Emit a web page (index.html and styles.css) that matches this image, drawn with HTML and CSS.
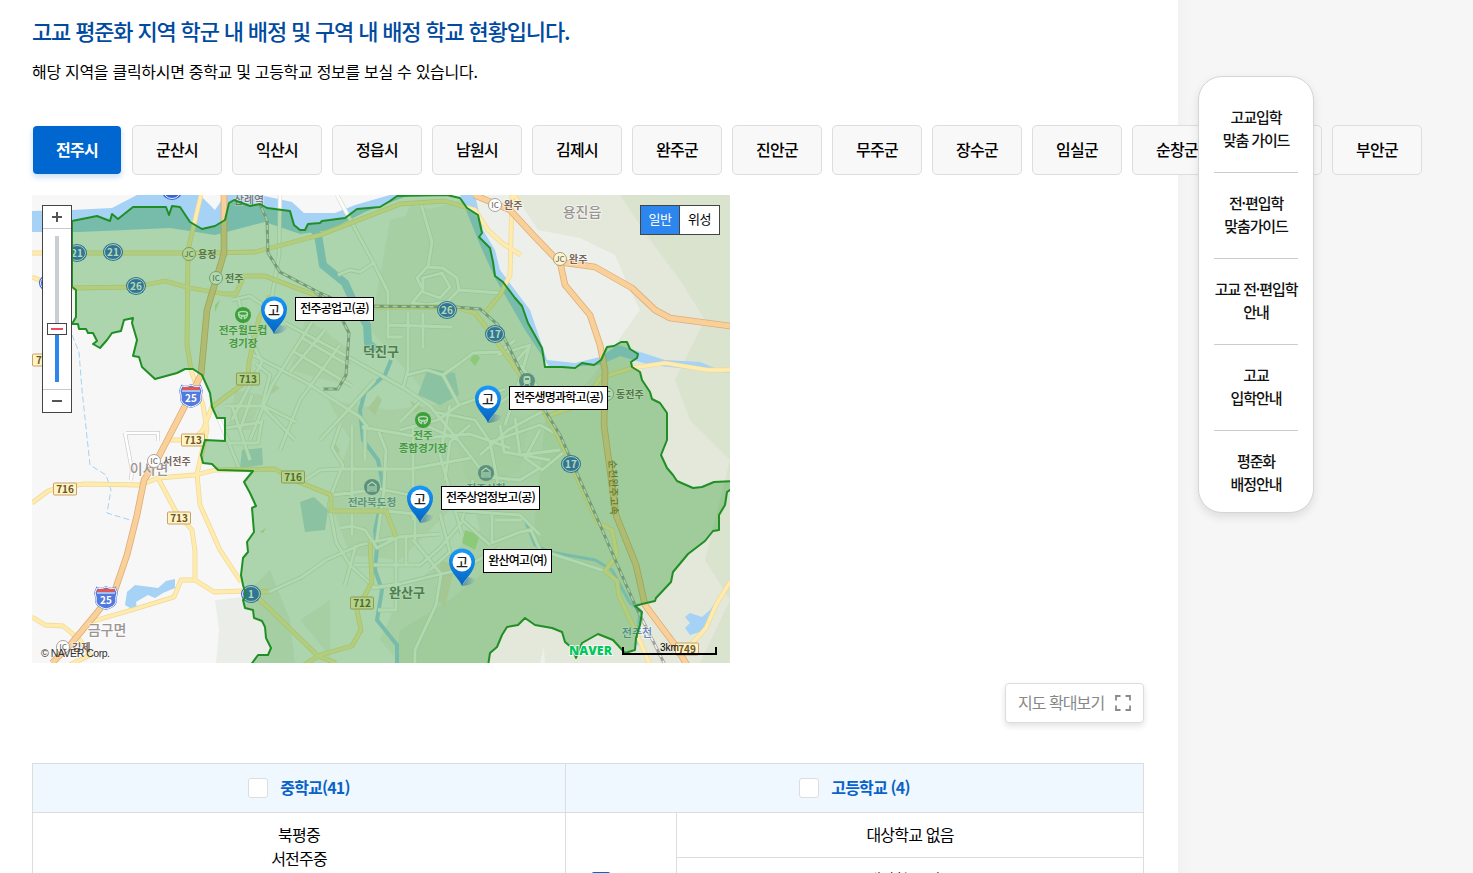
FILE: index.html
```html
<!DOCTYPE html>
<html lang="ko">
<head>
<meta charset="utf-8">
<title>고교 평준화 지역 학교 현황</title>
<link rel="stylesheet" href="styles.css">
</head>
<body>
<div class="layout">
<main class="content">
  <h1 class="title">고교 평준화 지역 학군 내 배정 및 구역 내 배정 학교 현황입니다.</h1>
  <p class="lead">해당 지역을 클릭하시면 중학교 및 고등학교 정보를 보실 수 있습니다.</p>
  <nav class="tabs">
    <button class="tab active">전주시</button><button class="tab">군산시</button><button class="tab">익산시</button><button class="tab">정읍시</button><button class="tab">남원시</button><button class="tab">김제시</button><button class="tab">완주군</button><button class="tab">진안군</button><button class="tab">무주군</button><button class="tab">장수군</button><button class="tab">임실군</button><button class="tab">순창군</button><button class="tab">고창군</button><button class="tab">부안군</button>
  </nav>

  <div class="map">
    <svg class="map-canvas" viewBox="32 195 698 468" width="698" height="468">
      <defs>
        <linearGradient id="pinFill" x1="0" y1="0" x2="0" y2="1"><stop offset="0" stop-color="#1b9af7"/><stop offset=".5" stop-color="#0b7fe0"/><stop offset="1" stop-color="#0864bd"/></linearGradient>
        <linearGradient id="pinShade" x1="0" y1="0" x2="1" y2="0"><stop offset="0" stop-color="#1f5fa6" stop-opacity=".6"/><stop offset="1" stop-color="#1f5fa6" stop-opacity="0"/></linearGradient>
        <g id="pin">
          <path d="M0 0 L6 -9 L14 -7 Q12 -1 0 0Z" fill="url(#pinShade)"/>
          <path d="M0 0 C-3 -8 -13 -14 -13 -25 A13 12.500 0 0 1 13 -25 C13 -14 3 -8 0 0Z" fill="url(#pinFill)"/>
          <circle cx="0" cy="-24" r="9.500" fill="#fff"/>
          <text class="pin-text" x="0" y="-19">고</text>
        </g>
        <g id="shield">
          <path d="M-9 -10 Q-5 -8 0 -11 Q5 -8 9 -10 L11 -5 Q9 0 10 4 Q8 9 0 11 Q-8 9 -10 4 Q-9 0 -11 -5Z" fill="#5279dc" stroke="#5279dc" stroke-width="2"/>
          <path d="M-9 -10 Q-5 -8 0 -11 Q5 -8 9 -10 L11 -5 Q9 0 10 4 Q8 9 0 11 Q-8 9 -10 4 Q-9 0 -11 -5Z" fill="#5279dc" stroke="#fff" stroke-width="1"/>
          <path d="M-8 -9 H8 L9 -6 H-9Z" fill="#e4574f"/><path d="M-9 -5 H9" stroke="#fff"/>
          <text class="num" x="0" y="6">25</text>
        </g>
        <g id="round"><ellipse rx="10" ry="9" fill="#3a63d4"/><ellipse rx="8.500" ry="7.500" fill="#3a63d4" stroke="#fff" stroke-width=".9"/></g>
        <g id="ic"><circle r="6.500" fill="#fff" stroke="#a9a39f"/><text class="ic-text" y="3">IC</text></g>
        <g id="jc"><circle r="6.500" fill="#fff6cf" stroke="#a99b7f"/><text class="ic-text" y="3">JC</text></g>
        <g id="plate"><rect x="-11.500" y="-6" width="23" height="12" rx="1" fill="#fff4c2" stroke="#c9a06b"/></g>
        <g id="minor">
          <path d="M280 195 L279 255 L272 296 M337 195 L373 262 L388 292 V313 M338 275 L350 270 L360 272 L375 262 M420 200 L432 242 L428 267"/>
          <path d="M412 303 L423 290 L417 278 L427 267 L443 268 L457 278 L459 290 L447 302 L427 305Z M423 278 L442 273 L450 287 L440 298 L423 292Z M459 290 L500 293"/>
          <path d="M388 313 V337 H402 M388 325 L452 327 M408 313 V370 L403 388 M423 313 V348 M407 375 L427 370 L443 375 L460 363 L473 353 L500 352 L515 340"/>
          <path d="M253 355 L307 383 L360 417 L370 430 M285 323 L330 347 L407 390 L430 406 L458 440 M325 330 L290 372 M312 322 L272 385 L250 440 M340 345 L300 400 L280 450 M293 351 L352 386 M302 338 L350 366 M375 380 L348 410 L320 440 M443 375 L459 405 L438 420 L400 430 M459 405 L505 389 M420 402 L400 422"/>
          <path d="M232 300 L250 296 L270 310 M238 298 L250 338 L262 362 L250 385 L232 420 M225 406 H262 L295 440 M216 412 L240 470 M232 406 L250 460 M252 395 L240 430 M226 428 L262 422 M228 443 H258 L262 420 M256 364 L270 375 L262 405 L296 422"/>
          <path d="M340 425 L332 448 L343 465 L333 490 L329 505 L336 542 L350 565 L375 588 M352 425 V535 M365 425 V460 M378 430 L386 450 L384 490 L377 540 M341 469 L410 469 L470 458 M333 495 L380 489 L410 495 M362 427 L424 438 L470 434 L510 448 M385 511 L415 514 V540 M340 528 L352 526 L365 530 L377 548 L398 537 L440 534 M396 537 V610 H378 M354 565 H392 L420 565 L440 548 L462 522 M413 425 V520 M413 540 L441 574 L460 570 L500 548 M441 574 L436 605 L415 650 V663 M305 480 L320 470 L343 469 M269 592 L302 577 L326 560 L360 545 L396 537 M372 588 L400 584 L441 574 M440 514 L450 552 L430 570 M406 538 V565 M356 545 L345 585"/>
          <path d="M425 425 L458 440 L485 475 L510 480 M435 412 L475 420 L490 442 L500 495 M450 405 L440 455 L455 510 L462 534 M470 425 L450 442 L445 480 M490 442 L540 425 L560 436 L564 452 L542 470 L525 458 L540 430 M480 455 L508 430 L545 410 M500 425 L504 452 L550 460 M515 418 L520 455 L560 450 M478 476 L520 480 L540 468 M455 510 L490 513 L520 515 L540 535 M492 515 V543 L520 532 L531 530 L540 550 L605 571 M495 520 H522 M473 480 L462 520 L490 545 M498 355 L530 345 L515 395 L505 425 M520 365 L540 390 L562 410 M525 385 L497 405 M528 348 L512 366"/>
        </g>
        <g id="yellow">
          <path d="M32 253 H75 L205 253 L255 252 L320 235 L400 204 L445 201 L475 210 L488 230 L502 243 L521 255"/>
          <path d="M32 277 L42 281 M72 288 L135 287 L165 281 L190 288 L225 294 H236 L244 276 L265 276 L320 297 L350 307 H455 L475 313 L490 332 L506 355 L535 395 L560 440 L598 523 L612 530 L617 555 L605 571 L617 581 L619 596 L636 632 L650 665"/>
          <path d="M201 195 L188 250 L187 345 L191 370 L203 405 L207 430 L197 474 L200 505 L220 550 L241 582"/>
          <path d="M32 503 L48 491 L60 487 L85 484 L140 485 L158 478 L195 475 L215 470 L275 469 L294 480 L331 495 V511 H386 L396 537"/>
          <path d="M158 478 L175 510 L192 530 L195 551 V580 L181 580 L174 597 L135 609 L90 622 L70 645 M195 580 L214 592 L244 591 L269 592 M251 591 L318 656 L336 663 M304 665 L320 655 L352 646 L361 630 L357 610 L372 582 L370 542"/>
          <path d="M32 617 L45 625 L63 626 L80 640 L90 655 L70 665 M248 380 L249 362 L259 318 L270 296 M248 380 L212 407 L203 430 L193 440 L170 440 M521 205 L514 195 M512 195 L510 275 L500 295 L485 313 M632 368 L665 363 L708 370 H730 M632 368 L600 378 L585 403 L545 417 M730 582 L716 605 L706 628 L688 648"/>
        </g>
        <g id="highway">
          <path d="M224 195 L224 253 L207 310 L201 375 L158 458 L144 480 L137 515 L127 555 L115 590 L95 615 L70 645 L52 663"/>
          <path d="M474 195 L510 210 L535 237 L559 262 L595 267 L632 288 L655 310 L670 318 L730 326 M560 262 L565 285 L590 315 L600 345 L605 370 L604 425 L616 515 L636 565 L645 605 L675 645 L687 665"/>
        </g>
      </defs>

      <rect x="32" y="195" width="698" height="468" fill="#f7f7f7"/>
      <path class="land-a" d="M480 195 H730 V663 H400 L380 640 L400 595 L480 530 L450 420 L370 330 L390 220Z"/>
      <path class="land-b" d="M515 195 L538 230 L580 238 L615 255 L630 290 L640 310 L615 345 L590 380 L545 420 L535 520 L545 663 H730 V195Z"/>
      <path class="land-c" d="M620 195 H730 V663 H700 L730 600 L705 560 L730 460 L690 420 L675 380 L705 320 L680 280 L650 240Z"/>
      <path class="land-a" d="M385 270 L410 205 L460 215 L475 255 L440 295Z M325 650 L300 620 L330 600 L330 663Z"/>
      <path class="land-b" d="M450 600 L500 560 L560 575 L540 663 H395 L400 630Z"/>
      <path class="land-d" d="M215 600 L243 597 L270 570 L290 620 L295 663 H216 L219 630Z"/>
      <path class="urban" d="M306 318 L350 350 L345 385 L290 370Z M328 400 L350 440 L330 500 L350 555 L400 560 L450 510 L520 470 L530 420 L470 400 L390 410Z M235 390 L262 395 L250 430 L228 430Z"/>
      <path class="wash" d="M378 395 L382 400 L375 415 L368 408Z M410 400 L423 408 L415 413Z M440 560 L455 565 L445 608 L438 600Z M332 440 L340 450 L335 458Z M275 385 L280 388 L270 395Z"/>
      <path class="park" d="M475 352 L480 358 L475 366 L470 360Z M260 532 L266 528 L263 533Z M465 530 L480 535 L475 550 L462 543Z M215 305 L220 300 L215 312Z"/>

      <path class="water" d="M32 211 L72 210 L112 208 L137 195 H200 L215 210 L225 195 H260 L292 202 L304 213 L335 213 L355 205 L390 195 H410 L365 212 L330 230 L300 234 L265 222 L215 235 L170 228 L80 232 H32Z"/>
      <path class="water" d="M125 605 L127 592 L135 585 L158 588 L166 581 L175 579 V588 L163 593 L155 598 L148 595 L136 602 L137 609 L130 608Z M685 628 L690 623 L685 617 L690 613 L702 617 L710 610 L720 595 L716 610 L706 630 L690 635Z"/>
      <path class="lake" d="M428 368 L455 373 L459 395 L440 405 L418 395Z M300 502 L314 497 L328 510 L325 530 L305 532Z M242 450 L262 448 L263 465 L240 468Z"/>
      <path class="water" d="M460 195 H475 L483 230 L495 250 L500 270 L530 310 L547 360 L575 363 L600 357 L618 345 L640 352 L665 360 L700 362 L720 370 L730 372 V373 L710 371 L650 365 L620 356 L600 365 L550 368 L525 330 L495 278 L480 245Z"/>
      <g class="river"><path stroke-width="8" d="M310 225 L318 235 L323 265 L345 283 L355 305 L367 325 L368 343 L376 350"/><path stroke-width="4" d="M391 360 L385 375 L365 392 L360 410 L363 440 L378 460 L384 490 L375 530 L377 548 L375 570 L382 590 L377 620 L397 645 V663"/><path stroke-width="3" d="M525 520 L535 545 L550 552 L595 560 L612 570 L630 603 L640 610 L637 645"/></g>
      <path class="brook" d="M72 335 L79 352 L82 390 L90 465 L106 475 L111 490 L107 513 L130 520 M43 238 V245"/>

      <path d="M126 433 H158 V441 M131 480 L132 470 L125 433" class="outline-road"/>
      <path d="M126 433 H158 V441 M131 480 L132 470 L125 433" class="outline-fill"/>
      <use href="#minor" class="minor-case"/><use href="#minor" class="minor-fill"/>
      <use href="#yellow" class="yellow-case"/><use href="#yellow" class="yellow-fill"/>
      <g id="rail"><path class="rail" d="M258 200 L267 220 L268 253 L280 272 L318 292 L350 306 L455 307 L480 309 L498 325 L520 370 L560 435 L600 525 L635 605 L665 665 M315 292 L340 315 L349 333 L346 375 L338 389 H323"/><path class="rail-dash" d="M258 200 L267 220 L268 253 L280 272 L318 292 L350 306 L455 307 L480 309 L498 325 L520 370 L560 435 L600 525 L635 605 L665 665 M315 292 L340 315 L349 333 L346 375 L338 389 H323"/></g>
      <use href="#highway" class="highway-case"/><use href="#highway" class="highway-fill"/>

      <use href="#round" x="172" y="191"/>
      <use href="#round" x="49" y="283"/>
      <g transform="translate(77 253)"><use href="#round"/><text class="num" y="4">21</text></g>
      <g transform="translate(113 252)"><use href="#round"/><text class="num" y="4">21</text></g>
      <g transform="translate(136 286)"><use href="#round"/><text class="num" y="4">26</text></g>
      <g transform="translate(447 310)"><use href="#round"/><text class="num" y="4">26</text></g>
      <g transform="translate(495 334)"><use href="#round"/><text class="num" y="4">17</text></g>
      <g transform="translate(571 464)"><use href="#round"/><text class="num" y="4">17</text></g>
      <g transform="translate(251 594)"><use href="#round"/><text class="num" y="4">1</text></g>
      <use href="#shield" x="191" y="396"/><use href="#shield" x="106" y="598"/>
      <g transform="translate(248 379)"><use href="#plate"/><text class="plate-text" y="4">713</text></g>
      <g transform="translate(193 440)"><use href="#plate"/><text class="plate-text" y="4">713</text></g>
      <g transform="translate(179 518)"><use href="#plate"/><text class="plate-text" y="4">713</text></g>
      <g transform="translate(65 489)"><use href="#plate"/><text class="plate-text" y="4">716</text></g>
      <g transform="translate(293 477)"><use href="#plate"/><text class="plate-text" y="4">716</text></g>
      <g transform="translate(362 603)"><use href="#plate"/><text class="plate-text" y="4">712</text></g>
      <g transform="translate(687 649)"><use href="#plate"/><text class="plate-text" y="4">749</text></g>
      <g transform="translate(44 360)"><use href="#plate"/><text class="plate-text" x="-5" y="4">7</text></g>
      <text class="town" x="582" y="217">용진읍</text><text class="town" x="149" y="474">이서면</text><text class="town" x="107" y="635">금구면</text>
      <text class="city" x="381" y="356">덕진구</text><text class="city" x="407" y="597">완산구</text>
      <text class="station" x="249" y="204">삼례역</text>
      <use href="#jc" x="189" y="254"/><text class="small" x="198" y="258">용정</text>
      <use href="#ic" x="216" y="278"/><text class="small" x="225" y="282">전주</text>
      <use href="#ic" x="495" y="205"/><text class="small" x="504" y="209">완주</text>
      <use href="#jc" x="560" y="259"/><text class="small" x="569" y="263">완주</text>
      <use href="#ic" x="607" y="394"/><text class="small" x="616" y="398">동전주</text>
      <use href="#ic" x="154" y="461"/><text class="small" x="163" y="465">서전주</text>
      <use href="#ic" x="63" y="647"/><text class="small" x="72" y="651">김제</text>
      <g fill="#4aa646"><circle cx="243" cy="315" r="8"/><circle cx="423" cy="420" r="8"/></g>
      <g fill="none" stroke="#fff" stroke-width="1.500"><g id="stadium"><ellipse cx="243" cy="313.500" rx="4.500" ry="2"/><path d="M238.500 314 Q239 318 241.500 318.500 V316 H244.500 V318.500 Q247 318 247.500 314"/></g><use href="#stadium" x="180" y="105"/></g>
      <g fill="#7b8fb0"><circle cx="372" cy="487" r="8"/><circle cx="486" cy="473" r="8"/><circle cx="527" cy="381" r="8"/></g>
      <g fill="none" stroke="#fff" stroke-width="1.200"><path d="M368 485 L372 482 L376 485 V491 H368Z M370 486 V490 M372 486 V490 M374 486 V490"/><path d="M482 471 L486 468 L490 471 V477 H482Z M484 472 V476 M486 472 V476 M488 472 V476"/></g>
      <rect x="523.500" y="376" width="7" height="8" rx="2" fill="#fff"/><path d="M525 379 H529" stroke="#7b8fb0" stroke-width="2"/><path d="M525 384 L523 387 M529 384 L531 387" stroke="#fff"/>
      <g class="place"><text x="243" y="334">전주월드컵</text><text x="243" y="347">경기장</text><text x="423" y="439">전주</text><text x="423" y="452">종합경기장</text></g>
      <g class="office"><text x="372" y="506">전라북도청</text><text x="486" y="492">전주시청</text></g>
      <text class="stream" x="637" y="637">전주천</text>
      <text class="road-name" transform="translate(609 460) rotate(88)">순천완주고속</text>

      <path class="district" d="M72 221 L97 216 L110 221 L112 214 L118 219 L133 207 H166 L169 215 L172 206 L180 207 L190 222 L202 229 L215 226 L225 220 L229 203 L234 200 L250 206 L260 204 L267 208 L290 211 L294 225 L300 230 L305 230 L308 224 L320 223 L322 221 L345 218 L357 209 L380 207 L390 201 L397 196 L447 195 L460 198 L467 208 L478 215 L482 233 L479 237 L490 248 L493 262 L495 276 L503 282 L515 298 L522 306 L528 323 L542 348 L545 367 H562 L575 368 L582 363 L594 365 L601 360 L607 347 L614 346 L621 342 L627 342 L630 349 L638 354 L637 358 L631 362 L632 367 L640 372 L642 380 L650 392 L652 399 L660 403 L667 413 V440 L661 455 L667 468 L673 475 L677 481 L693 488 L702 487 L714 482 L733 481 V488 L727 492 L725 505 L719 515 V530 L713 531 L705 541 L688 554 L673 572 L671 582 L656 598 L655 601 L642 604 L635 606 L642 612 L640 625 L636 638 L635 650 L625 653 L613 640 L598 634 L582 643 L576 658 L572 648 L565 642 L562 632 L552 628 L535 625 L525 618 L518 625 L507 627 L502 635 L497 647 L490 653 L488 666 H250 L258 655 L268 655 L271 648 L266 638 L265 627 L262 621 L254 618 L253 610 L245 608 L243 600 L246 595 L243 585 L241 575 L243 558 L248 552 L247 542 L254 532 L252 508 L256 506 L250 493 L244 482 L253 471 L218 470 L212 464 L203 463 L201 455 L205 440 L225 441 V418 H217 L212 407 L210 393 L202 375 L193 369 H185 L177 373 L155 379 L142 367 L139 357 L133 356 L137 340 L132 323 L133 318 L124 320 L121 331 L112 333 L107 340 L100 348 L93 344 L97 341 L93 333 H88 L86 329 H79 L78 324 H72 L76 317 V290 L72 287Z"/>

      <use href="#pin" x="274" y="334"/><use href="#pin" x="488" y="423"/><use href="#pin" x="420" y="523"/><use href="#pin" x="462" y="586"/>
      <text class="naver" x="569" y="655" textLength="43" lengthAdjust="spacingAndGlyphs">NAVER</text>
      <path d="M623 647 V654 H716 V647" fill="none" stroke="#000" stroke-width="2"/>
      <text class="scale" x="660" y="651">3km</text>
      <text class="copy" x="41" y="657" textLength="69">© NAVER Corp.</text>
    </svg>
    <span class="place-tag tag-1">전주공업고(공)</span>
    <span class="place-tag tag-2">전주생명과학고(공)</span>
    <span class="place-tag tag-3">전주상업정보고(공)</span>
    <span class="place-tag tag-4">완산여고(여)</span>
    <div class="zoom">
      <svg width="30" height="208" viewBox="0 0 30 208">
        <rect x=".5" y=".5" width="29" height="207" fill="#fff" stroke="#444"/>
        <path d="M1 23.500 H29 M1 184.500 H29" stroke="#c8c9ce"/>
        <path d="M10 12 H20 M15 7 V17 M10 196 H20" stroke="#555" stroke-width="2"/>
        <rect x="13" y="31" width="4" height="90" fill="#cacdd1"/><rect x="13" y="129" width="4" height="48" fill="#2d86ed"/>
        <rect x="5.500" y="118.500" width="19" height="11" fill="#fff" stroke="#444"/><path d="M9 124 H21" stroke="#ef4c55" stroke-width="2"/>
      </svg>
    </div>
    <div class="map-type"><span class="type-on">일반</span><span class="type-off">위성</span></div>
  </div>

  <div class="actions"><button class="expand"><span>지도 확대보기</span>
    <svg width="16" height="16" viewBox="0 0 16 16"><path d="M1 5.500 V1 H5.500 M10.500 1 H15 V5.500 M15 10.500 V15 H10.500 M5.500 15 H1 V10.500" fill="none" stroke="#8a8a8a" stroke-width="1.800"/></svg></button></div>

  <div class="table">
    <div class="th"><span class="check"></span><span class="th-text">중학교(41)</span></div>
    <div class="th"><span class="check"></span><span class="th-text">고등학교 (4)</span></div>
    <div class="schools">북평중<br>서전주중</div>
    <div class="pick"><span class="check checked"></span></div>
    <div class="rows"><div class="row">대상학교 없음</div><div class="row">대상학교 없음</div></div>
  </div>
</main>
<aside class="side"></aside>
</div>
<nav class="quick">
  <a>고교입학<br>맞춤 가이드</a><a>전·편입학<br>맞춤가이드</a><a>고교 전·편입학<br>안내</a><a>고교<br>입학안내</a><a>평준화<br>배정안내</a>
</nav>
</body>
</html>
```
FILE: styles.css
```css
* { box-sizing: border-box; }
body { margin: 0; height: 873px; overflow: hidden; background: #fff; color: #000; font-family: "Noto Sans CJK KR", sans-serif; font-size: 16px; }
.layout { display: flex; height: 873px; }
.content { width: 1178px; height: 873px; flex: none; padding: 14px 34px 0 32px; position: relative; z-index: 1; }
.side { flex: 1; background: linear-gradient(90deg, #f2f2f2, #f6f6f6 14px); }
.title { margin: 0; font-size: 22px; line-height: 32px; font-weight: 500; letter-spacing: -1.16px; color: #004a9f; white-space: nowrap; }
.lead { margin: 13px 0 0; line-height: 24px; font-size: 16px; letter-spacing: -.3px; white-space: nowrap; }
.tabs { display: flex; gap: 10px; width: 1390px; margin-top: 42px; }
.tab { width: 90px; height: 50px; flex: none; padding: 0 0 2px; border: 1px solid #ddd; border-radius: 5px; background: #f8f8f8; font: 500 16px "Noto Sans CJK KR", sans-serif; letter-spacing: -.8px; color: #000; }
.tab.active { background: #0066d0; background-clip: padding-box; border-color: transparent; color: #fff; font-weight: 700; box-shadow: 0 3px 5px rgba(0, 102, 208, .18); }
.map { position: relative; width: 698px; height: 468px; margin-top: 20px; overflow: hidden; }
.map-canvas { display: block; }
.land-a { fill: #edefea; }
.land-b { fill: #e3e8da; }
.land-c { fill: #d3dfc6; opacity: .6; }
.land-d { fill: #ebeee8; }
.urban { fill: #e8e8dc; opacity: .5; }
.wash { fill: #eadfca; opacity: .8; }
.park { fill: #c5e6a8; }
.water { fill: #a5d2f5; }
.lake { fill: #c4dbe6; }
.river { fill: none; stroke: #a5d2f5; }
.brook { fill: none; stroke: #a5d2f5; stroke-dasharray: 6 3; }
.outline-road { fill: none; stroke: #ccc; stroke-width: 4; }
.outline-fill { fill: none; stroke: #fff; stroke-width: 2.6; }
.minor-case { fill: none; stroke: #dcdfd8; stroke-width: 4.4; stroke-linejoin: round; }
.minor-fill { fill: none; stroke: #fdfdfb; stroke-width: 2.8; stroke-linejoin: round; }
.yellow-case { fill: none; stroke: #efd995; stroke-width: 4.8; stroke-linejoin: round; }
.yellow-fill { fill: none; stroke: #ffebae; stroke-width: 3.4; stroke-linejoin: round; }
.highway-case { fill: none; stroke: #dfad74; stroke-width: 6.6; stroke-linejoin: round; }
.highway-fill { fill: none; stroke: #fad09a; stroke-width: 5; stroke-linejoin: round; }
.rail { fill: none; stroke: #a0a0a0; stroke-width: 3; }
.rail-dash { fill: none; stroke: #eee; stroke-width: 1.6; stroke-dasharray: 5 4; }
.district { fill: rgba(35, 148, 35, .35); stroke: #1f8f25; stroke-width: 2; stroke-linejoin: round; }
.map-canvas text { font-family: "Noto Sans CJK KR", sans-serif; }
.num { font-size: 10px; font-weight: 700; fill: #fff; text-anchor: middle; }
.plate-text { font-size: 10px; font-weight: 700; fill: #6c5430; text-anchor: middle; }
.ic-text { font-size: 8px; font-weight: 500; fill: #7a716b; text-anchor: middle; }
.town, .city, .station, .small, .place, .office, .stream { paint-order: stroke; stroke: rgba(255, 255, 255, .5); stroke-width: 2px; }
.town { font-size: 14px; font-weight: 500; fill: #9b9494; text-anchor: middle; }
.city { font-size: 13px; font-weight: 700; fill: #67706b; text-anchor: middle; }
.station { font-size: 11px; font-weight: 500; fill: #777; text-anchor: middle; }
.small { font-size: 10px; font-weight: 700; fill: #75655c; }
.place { font-size: 10.6px; font-weight: 700; fill: #5a9c53; text-anchor: middle; }
.office { font-size: 10.6px; font-weight: 700; fill: #8492b0; text-anchor: middle; }
.stream { font-size: 11px; font-weight: 500; fill: #6589bd; text-anchor: middle; }
.road-name { font-size: 10px; font-weight: 500; fill: #8b6b2d; }
.pin-text { font-size: 13px; font-weight: 500; fill: #222; text-anchor: middle; }
.map-canvas .naver { font-family: "Open Sans", sans-serif; font-size: 12px; font-weight: 800; fill: #03c75a; paint-order: stroke; stroke: #fff; stroke-width: 1.5px; }
.map-canvas .scale { font-family: "Liberation Sans", sans-serif; font-size: 10px; fill: #000; }
.map-canvas .copy { font-family: "Liberation Sans", sans-serif; font-size: 10.5px; fill: #333; }
.place-tag { position: absolute; height: 24px; border: 1px solid #000; background: #fff; text-align: center; font-size: 12px; font-weight: 500; line-height: 20px; letter-spacing: -.78px; white-space: nowrap; }
.tag-1 { left: 263px; top: 102px; width: 79px; }
.tag-2 { left: 477px; top: 191px; width: 99px; }
.tag-3 { left: 409px; top: 291px; width: 99px; }
.tag-4 { left: 451px; top: 354px; width: 69px; }
.zoom { position: absolute; left: 10px; top: 10px; width: 30px; height: 208px; }
.map-type { position: absolute; left: 608px; top: 10px; display: flex; width: 80px; height: 30px; border: 1px solid #444; background: #fff; font-size: 13px; line-height: 26px; letter-spacing: -.5px; text-align: center; }
.type-on { width: 39px; background: #2d86ed; color: #fff; border-right: 1px solid #444; }
.type-off { flex: 1; }
.actions { display: flex; justify-content: flex-end; margin-top: 20px; }
.expand { display: flex; align-items: center; justify-content: space-between; width: 139px; height: 40px; padding: 0 12px; border: 1px solid #ddd; border-radius: 4px; background: #fff; box-shadow: 0 3px 6px rgba(0, 0, 0, .12); font: 400 16px "Noto Sans CJK KR", sans-serif; letter-spacing: -.95px; color: #888; }
.expand span { padding-bottom: 2px; }
.table { display: grid; grid-template-columns: 533px 111px 468px; grid-template-rows: 49px 61px; width: 1112px; height: 110px; overflow: hidden; margin-top: 40px; border-top: 1px solid #ddd; line-height: 24px; letter-spacing: -.8px; text-align: center; }
.th { display: flex; align-items: center; justify-content: center; gap: 12px; background: #f0f8ff; border-left: 1px solid #ddd; border-bottom: 1px solid #ddd; color: #0a62c9; font-weight: 700; }
.th + .th { grid-column: span 2; border-right: 1px solid #ddd; }
.th-text { padding-bottom: 2px; }
.check { width: 20px; height: 20px; border: 1px solid #ddd; border-radius: 3px; background: #fff; }
.check.checked { display: block; background: #0066d0; border-color: #0066d0; }
.schools { padding-top: 9px; border-left: 1px solid #ddd; }
.pick { padding: 59px 0 0 25px; border-left: 1px solid #ddd; text-align: left; }
.rows { border-left: 1px solid #ddd; border-right: 1px solid #ddd; }
.row { height: 45px; line-height: 42px; border-bottom: 1px solid #ddd; }
.quick { position: absolute; z-index: 2; left: 1198px; top: 76px; width: 116px; height: 437px; padding: 10px 15px; border: 1px solid #d5d5d5; border-radius: 24px; background: #fff; box-shadow: 0 4px 10px rgba(0, 0, 0, .1); }
.quick a { display: block; height: 86px; padding-top: 18px; border-bottom: 1px solid #ccc; text-align: center; font-size: 15px; font-weight: 500; line-height: 23px; letter-spacing: -1.1px; white-space: nowrap; color: #111; }
.quick a:last-child { border-bottom: 0; }
```
